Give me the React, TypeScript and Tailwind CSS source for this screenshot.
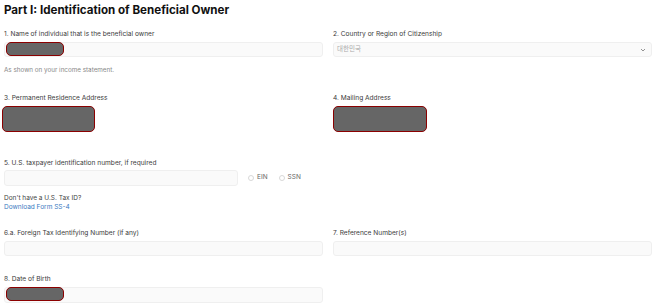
import React from 'react'

const font = { fontFamily: 'Inter, "Noto Sans CJK KR", sans-serif' }

function Label({ children }: { children: React.ReactNode }) {
  return <p className="text-[6.6px] leading-[10px] text-[#3a3a3a]">{children}</p>
}

function Redact({ className }: { className: string }) {
  return (
    <div
      className={`bg-[#666] border-[1.5px] border-[#8b0000] rounded-[5px] ${className}`}
    />
  )
}

function Field({ redacted, h = 'h-[15px]' }: { redacted?: boolean; h?: string }) {
  return (
    <div className={`relative mt-[3px] ${h} rounded-[3px] border border-[#efefef] bg-[#fafafa]`}>
      {redacted && <Redact className="absolute left-[1px] top-[-1px] w-[58px] h-[14px]" />}
    </div>
  )
}

export default function App() {
  return (
    <div className="w-[656px] h-[305px] bg-white overflow-hidden px-1 text-[#333]" style={font}>
      <h1 className="text-[11.6px] font-bold leading-[18px] pt-[1px] text-[#111]">
        Part I: Identification of Beneficial Owner
      </h1>

      <div className="grid grid-cols-2 gap-x-[10px] mt-[10px]">
        {/* row 1 */}
        <div>
          <Label>1. Name of individual that is the beneficial owner</Label>
          <Field redacted />
          <p className="text-[6.3px] leading-[10px] text-[#888] mt-[8px]">
            As shown on your income statement.
          </p>
        </div>
        <div>
          <Label>2. Country or Region of Citizenship</Label>
          <div className="mt-[3px] h-[15px] rounded-[3px] border border-[#efefef] bg-[#fafafa] flex items-center justify-between pl-[3px] pr-[5px]">
            <span className="text-[6.5px] text-[#aaa]">대한민국</span>
            <svg width="6" height="4" viewBox="0 0 6 4" fill="none">
              <path d="M1 1l2 2 2-2" stroke="#777" strokeWidth="0.8" />
            </svg>
          </div>
        </div>

        {/* row 2 */}
        <div className="mt-[18px]">
          <Label>3. Permanent Residence Address</Label>
          <Redact className="mt-[3px] ml-[-2px] w-[93px] h-[26px]" />
        </div>
        <div className="mt-[18px]">
          <Label>4. Mailing Address</Label>
          <Redact className="mt-[3px] w-[94px] h-[26px]" />
        </div>

        {/* row 3 */}
        <div className="mt-[26px] col-span-2">
          <Label>5. U.S. taxpayer identification number, if required</Label>
          <div className="flex items-center mt-[2px]">
            <div className="w-[234px] h-[16px] rounded-[3px] border border-[#efefef] bg-[#fafafa]" />
            <label className="flex items-center gap-[3px] ml-[10px] text-[6.5px] text-[#666]">
              <span className="w-[6px] h-[6px] rounded-full border border-[#d8d8d8]" />
              EIN
            </label>
            <label className="flex items-center gap-[3px] ml-[11px] text-[6.5px] text-[#666]">
              <span className="w-[6px] h-[6px] rounded-full border border-[#d8d8d8]" />
              SSN
            </label>
          </div>
          <p className="text-[6.5px] leading-[10px] text-[#444] mt-[7px]">Don't have a U.S. Tax ID?</p>
          <a href="#" className="block text-[6.5px] leading-[10px] text-[#3b7bbf] -mt-[1px]">
            Download Form SS-4
          </a>
        </div>

        {/* row 4 */}
        <div className="mt-[16px]">
          <Label>6.a. Foreign Tax Identifying Number (if any)</Label>
          <Field />
        </div>
        <div className="mt-[16px]">
          <Label>7. Reference Number(s)</Label>
          <Field />
        </div>

        {/* row 5 */}
        <div className="mt-[18px]">
          <Label>8. Date of Birth</Label>
          <Field redacted h="h-[16px]" />
        </div>
      </div>
    </div>
  )
}
